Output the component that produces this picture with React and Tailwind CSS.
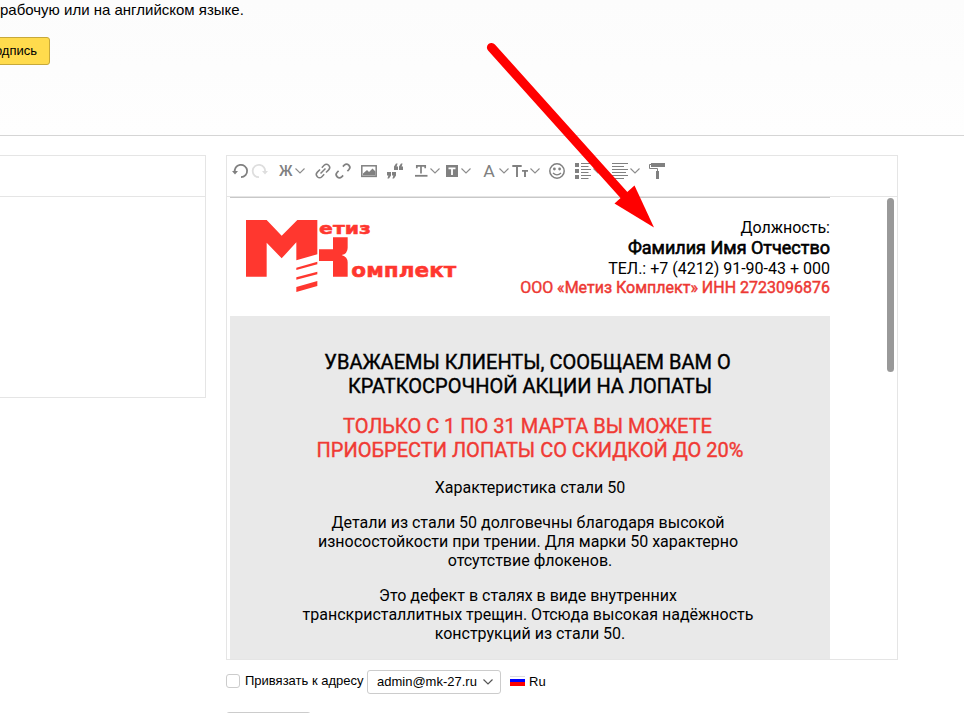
import React from "react";

function Icon({ x, w, className = "", children }) {
  return (
    <svg
      width={w}
      height="20"
      viewBox={`${x} 161 ${w} 20`}
      className={`shrink-0 overflow-visible ${className}`}
      fill="none"
      stroke="#808080"
      strokeWidth="1.5"
    >
      {children}
    </svg>
  );
}

function Chevron({ className }) {
  return (
    <svg width="10" height="20" viewBox="0 0 10 20" className={`shrink-0 ${className}`} fill="none" stroke="#8c8c8c" strokeWidth="1.1">
      <path d="M0.5 7.5 5 12 9.5 7.5" />
    </svg>
  );
}

function Toolbar() {
  return (
    <div className="flex h-[41px] shrink-0 items-start border-b border-[#e5e5e5] pl-[5px] pt-[5px]">
      <Icon x={232} w={16}>
        <path d="M234.9 172.5A6.2 6.2 0 1 1 241 177.2" strokeWidth="1.8" />
        <path d="M232 171h6l-3 3.4z" fill="#808080" stroke="none" />
      </Icon>
      <Icon x={252} w={16} className="ml-1">
        <path d="M264.9 172.5A6.2 6.2 0 1 0 259 177.2" stroke="#dedede" strokeWidth="1.8" />
        <path d="M268 171h-6l3 3.4z" fill="#dedede" stroke="none" />
      </Icon>
      <Icon x={279} w={14} className="ml-[11px]">
        <text x="279" y="176" fontSize="14" fontWeight="500" textLength="13.5" lengthAdjust="spacingAndGlyphs" fill="#808080" stroke="none" className="font-['Roboto',sans-serif]">Ж</text>
      </Icon>
      <Chevron className="ml-[2px]" />
      <Icon x={315} w={16} className="ml-[10px]">
        <g transform="rotate(-45 323 171)">
          <path d="M321.5 174.2h-3.3a3.2 3.2 0 0 1 0-6.4h3.8M324.5 167.8h3.3a3.2 3.2 0 0 1 0 6.4h-3.8M319.5 171h7" />
        </g>
      </Icon>
      <Icon x={335} w={16} className="ml-1">
        <g transform="rotate(-45 343 171)">
          <path d="M340 174.2h-2a3.2 3.2 0 0 1 0-6.4h2M346 167.8h2a3.2 3.2 0 0 1 0 6.4h-2" strokeWidth="1.7" />
        </g>
      </Icon>
      <Icon x={361} w={16} className="ml-[10px]">
        <rect x="361.8" y="165.8" width="14.4" height="10.6" />
        <path d="M363 175.5v-2l4-3.5 2 2 3.5-3.5 3 3v4z" fill="#808080" stroke="none" />
      </Icon>
      <Icon x={387} w={16} className="ml-[10px]">
        <g fill="#808080" stroke="none">
          <path d="M387 172h4v3.5l-2 3h-1.6l1-3H387zM392 172h4v3.5l-2 3h-1.6l1-3H392zM398 170h-4v-3.5l2-3h1.6l-1 3H398zM403 170h-4v-3.5l2-3h1.6l-1 3H403z" />
        </g>
      </Icon>
      <Icon x={414} w={14} className="ml-[11px]">
        <path d="M416.8 168.3v-2.5h8.4v2.5M421 166v7.5" strokeWidth="1.7" />
        <path d="M415 175.8h12.5" strokeWidth="1.8" />
      </Icon>
      <Chevron className="ml-[2px]" />
      <Icon x={446} w={12} className="ml-[6px]">
        <rect x="446" y="165" width="12" height="12" fill="#808080" stroke="none" />
        <path d="M448.5 168.3h7M452 168v7" stroke="#fff" strokeWidth="1.8" />
      </Icon>
      <Chevron className="ml-[3px]" />
      <Icon x={484} w={10} className="ml-[13px]">
        <text x="483.2" y="177" fontSize="16.5" textLength="11.6" lengthAdjust="spacingAndGlyphs" fill="#808080" stroke="none" className="font-['Roboto',sans-serif]">A</text>
      </Icon>
      <Chevron className="ml-[5px]" />
      <Icon x={512} w={16} className="ml-[3px]">
        <path d="M512.3 166h9.4M517 166v11M522 170.9h6M525 170.9v6.1" strokeWidth="1.9" />
      </Icon>
      <Chevron className="ml-[2px]" />
      <Icon x={549} w={16} className="ml-[9px]">
        <circle cx="557" cy="171" r="7.2" />
        <circle cx="554.4" cy="169" r="1.4" fill="#808080" stroke="none" />
        <circle cx="559.6" cy="169" r="1.4" fill="#808080" stroke="none" />
        <path d="M553 173q4 3.8 8 0" strokeWidth="1.3" />
      </Icon>
      <Icon x={575} w={16} className="ml-[10px]">
        <path d="M575 163h4v4h-4zM575 169h4v4h-4zM575 175h4v4h-4z" fill="#808080" stroke="none" />
        <path d="M581 163.5h10M581 166.5h7.5M581 169.5h10M581 172.5h7.5M581 175.5h10M581 178.5h7.5" strokeWidth="1" />
      </Icon>
      <Chevron className="ml-[2px]" />
      <Icon x={612} w={16} className="ml-[9px]">
        <path d="M612 163.5h16M612 166.5h12M612 169.5h16M612 172.5h14M612 175.5h16M612 178.5h12" strokeWidth="1" />
      </Icon>
      <Chevron className="ml-[2px]" />
      <Icon x={649} w={16} className="ml-[9px]">
        <path d="M651 163h14v4h-14zM656 171h3v8h-3z" fill="#808080" stroke="none" />
        <path d="M652 164.5h-2.5v4h8v3" strokeWidth="1" />
      </Icon>
    </div>
  );
}

function Logo() {
  return (
    <svg width="212" height="72" viewBox="30 45 636 216" fill="#ff372f" className="ml-4 mt-[22px] shrink-0 overflow-visible">
      <path d="M30 45H92L137 92 184 45H244V148L181 166V112L137 160 92 113V215H30Z" />
      <path d="M181 188 244 170V178L181 195ZM181 217 244 200V208L181 224ZM181 246 244 228V243L181 261Z" />
      <path d="M249 133H291V97H335V128Q335 146 317 150 335 156 335 172V215H291V168H249Z" />
      <g className="font-['DejaVu_Sans',sans-serif]" fontWeight="700" stroke="#ff372f" strokeWidth="1.5">
        <text x="249" y="87" fontSize="50" textLength="156" lengthAdjust="spacingAndGlyphs">етиз</text>
        <text x="346" y="217" fontSize="60" textLength="315" lengthAdjust="spacingAndGlyphs">омплект</text>
      </g>
    </svg>
  );
}

function EmailBody() {
  return (
    <div className="ml-[3px] w-[600px] shrink-0 border-t border-[#c8c8c8] font-['Roboto',sans-serif] text-base text-black">
      <div className="flex h-[118px] justify-between">
        <Logo />
        <div className="pt-5 text-right leading-5 whitespace-nowrap">
          <p>Должность:</p>
          <p className="mb-px text-[18px] leading-5 [-webkit-text-stroke:0.6px_currentColor]">Фамилия Имя Отчество</p>
          <p>ТЕЛ.: +7 (4212) 91-90-43 + 000</p>
          <p className="leading-[18px] text-[#ed3833] [-webkit-text-stroke:0.45px_currentColor]">ООО «Метиз Комплект» ИНН 2723096876</p>
        </div>
      </div>
      <div className="flex h-[344px] flex-col gap-4 bg-[#e9e9e9] pt-[34px] text-center leading-[19px] whitespace-nowrap">
        <h1 className="text-xl leading-6 [-webkit-text-stroke:0.4px_currentColor]">
          <span>УВАЖАЕМЫ КЛИЕНТЫ, СООБЩАЕМ ВАМ О&nbsp;</span><br />
          <span>КРАТКОСРОЧНОЙ АКЦИИ НА ЛОПАТЫ</span>
        </h1>
        <h2 className="text-xl leading-6 text-[#f03a34] [-webkit-text-stroke:0.4px_currentColor]">
          <span>ТОЛЬКО С 1 ПО 31 МАРТА ВЫ МОЖЕТЕ&nbsp;</span><br />
          <span>ПРИОБРЕСТИ ЛОПАТЫ СО СКИДКОЙ ДО 20%</span>
        </h2>
        <p>Характеристика стали 50</p>
        <p>
          Детали из стали 50 долговечны благодаря высокой&nbsp;<br />
          износостойкости при трении. Для марки 50 характерно&nbsp;<br />
          отсутствие флокенов.
        </p>
        <p>
          Это дефект в сталях в виде внутренних&nbsp;<br />
          транскристаллитных трещин. Отсюда высокая надёжность&nbsp;<br />
          конструкций из стали 50.
        </p>
      </div>
    </div>
  );
}

function BindRow() {
  return (
    <div className="mt-[10px] flex h-6 items-center text-[13px] whitespace-nowrap">
      <span className="-mt-0.5 h-[14px] w-[14px] shrink-0 rounded-[3px] border border-[#ccc] bg-white" />
      <span className="ml-[5px] w-[122px] -mt-0.5">Привязать к адресу</span>
      <div className="flex h-6 w-[134px] shrink-0 items-center justify-between rounded-[3px] border border-[#ccc] pl-[9px] pr-[7px]">
        <span>admin@mk-27.ru</span>
        <svg width="10" height="6" viewBox="0 0 10 6" fill="none" stroke="#555" strokeWidth="1.2"><path d="M.5.5 5 5 9.5.5" /></svg>
      </div>
      <span className="-mt-0.5 ml-[9px] flex h-[10px] w-[15px] flex-col">
        <span className="h-[3px] border-t border-[#ddd] bg-white" />
        <span className="h-[3px] bg-[#0000fe]" />
        <span className="h-[4px] bg-[#fe0000]" />
      </span>
      <span className="ml-1">Ru</span>
    </div>
  );
}

export default function App() {
  return (
    <div className="relative flex h-[713px] w-[964px] flex-col overflow-hidden bg-white font-['Liberation_Sans',Arial,sans-serif] text-black">
      <header className="h-[136px] shrink-0 border-b border-[#d5d5d5] bg-[#fcfcfc] bg-linear-to-b from-[#fcfcfc] to-[#fefefe]">
        <p className="h-[37px] pt-px text-[15px] leading-[18px] whitespace-nowrap">рабочую или на английском языке.</p>
        <button className="-ml-10 flex h-7 w-[90px] items-center justify-end rounded-[3px] border border-[#c7a93a] bg-[#ffdb4d] pr-3 text-[13px]">
          Подпись
        </button>
      </header>
      <main className="flex pt-[19px]">
        <section className="-ml-1 h-[243px] w-[210px] shrink-0 border border-[#e5e5e5]">
          <div className="h-[41px] border-b border-[#e5e5e5]" />
        </section>
        <section className="ml-5 w-[672px] shrink-0">
          <div className="flex h-[505px] flex-col overflow-hidden border border-[#e5e5e5]">
            <Toolbar />
            <div className="flex min-h-0 flex-1 justify-between">
              <EmailBody />
              <span className="mr-[3px] mt-px h-[174px] w-[7px] rounded-full bg-[#999]" />
            </div>
          </div>
          <BindRow />
          <div className="mt-[18px] h-6 w-[85px] rounded-[3px] border border-[#ccc]" />
        </section>
      </main>
      <svg width="964" height="713" className="pointer-events-none absolute left-0 top-0">
        <path d="M491.5 47.5 630 201.7" stroke="#f00" strokeWidth="9.2" strokeLinecap="round" />
        <path d="M654 227.5 614.5 203.5 634.5 185.5Z" fill="#f00" />
      </svg>
    </div>
  );
}
